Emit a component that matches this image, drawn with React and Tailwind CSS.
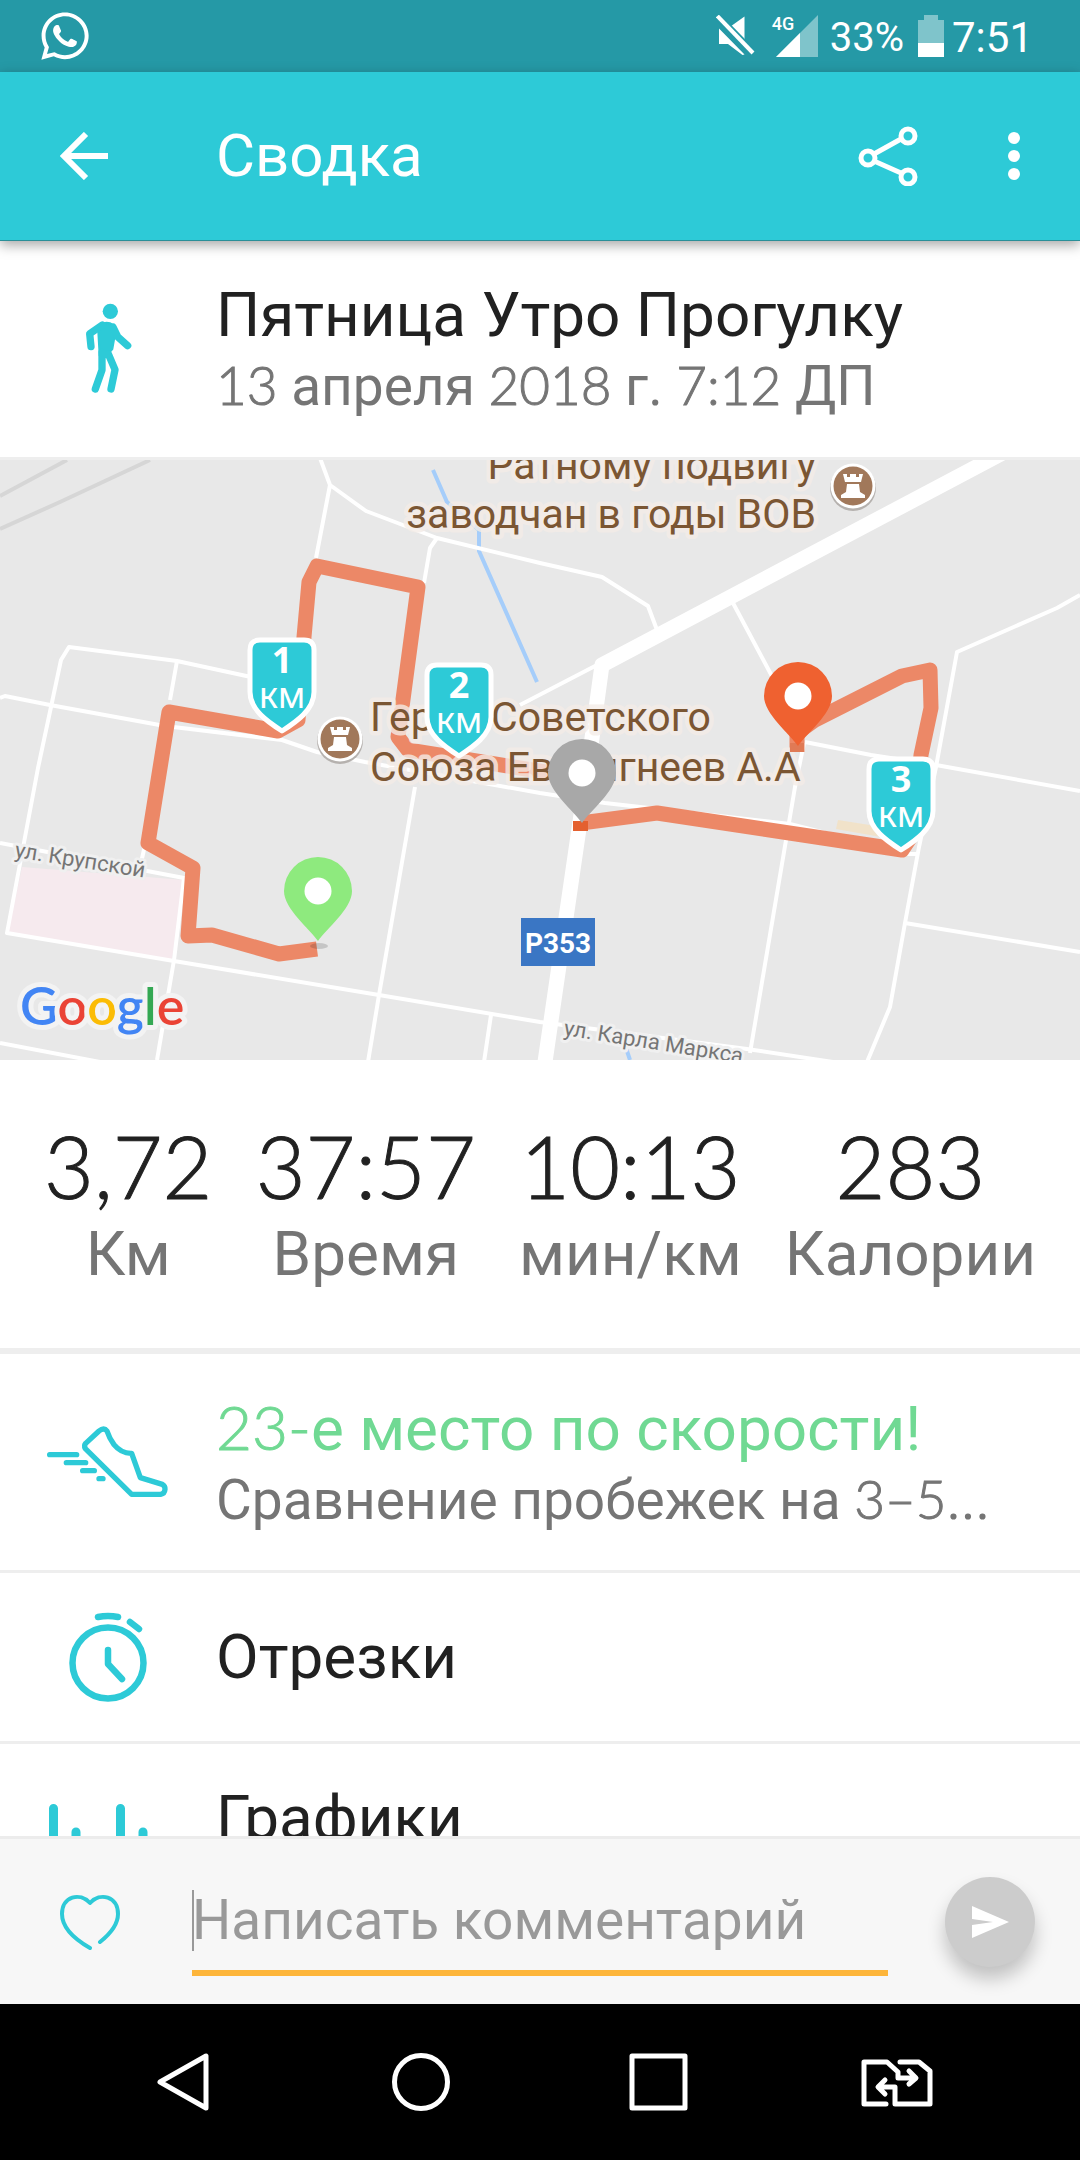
import React from "react";
import { FaWhatsapp } from "react-icons/fa";

const TEAL = "#2dcad7";

/* Digits are set in light Lato with a thin outline, letters in Roboto. */
const DIGITS = "font-['Lato',sans-serif] font-light [-webkit-text-stroke:1px_currentColor]";

function Mixed({ children, digits = "" }) {
  return children.split(/([\d:–-]+)/).map((part, i) =>
    /^[\d:–-]+$/.test(part) ? (
      <span key={i} className={`${DIGITS} ${digits}`}>{part}</span>
    ) : (
      <React.Fragment key={i}>{part}</React.Fragment>
    )
  );
}

function StatusBar() {
  return (
    <div className="flex h-[72px] shrink-0 items-center justify-between bg-[#2599a6] pl-[38px] pr-[47px] text-white">
      <FaWhatsapp className="size-[54px]" aria-label="WhatsApp" />
      <div className="flex items-center">
        <svg className="mr-[16px] h-[42px] w-[40px]" viewBox="0 0 40 42" fill="#fff">
          <path d="M14.500 11.500L28.500 1.500V26Z" />
          <path d="M1.400 1.500L37 38" stroke="#2599a6" strokeWidth="8" />
          <path d="M1.400 1L37 38" stroke="#fff" strokeWidth="4" />
          <path d="M3 13.500L28.500 39.500L26.500 40L12 29H3Z" />
        </svg>
        <div className="relative mr-[12px] h-[42px] w-[46px]">
          <svg className="h-full w-full" viewBox="0 0 46 42">
            <path d="M4 42L46 0V42Z" fill="#7fc4cb" />
            <path d="M4 42L28 18V42Z" fill="#fff" />
          </svg>
          <span className="absolute top-0 left-0 text-[18px] leading-[18px] font-medium">4G</span>
        </div>
        <span className="mr-[14px] pt-[4px] text-[40px] leading-[48px]">33%</span>
        <svg className="mr-[8px] h-[42px] w-[26px]" viewBox="0 0 26 42">
          <path d="M6 0H20V5H26V42H0V5H6Z" fill="#7fc4cb" />
          <path d="M0 28H26V42H0Z" fill="#fff" />
        </svg>
        <span className="pt-[4px] text-[42px] leading-[48px]">7:51</span>
      </div>
    </div>
  );
}

function AppBar() {
  return (
    <header className="z-10 flex h-[169px] shrink-0 items-center border-b border-[#2a8f98] bg-[#2dcad7] text-white shadow-[0_4px_12px_rgba(0,0,0,0.35)]">
      <button type="button" aria-label="Назад" className="flex w-[216px] items-center pl-[60px]">
        <svg className="size-[48px]" viewBox="0 0 48 48" fill="none" stroke="#fff" strokeWidth="6">
          <path d="M48 24H6M26 2L4 24L26 46" />
        </svg>
      </button>
      <h1 className="flex-1 text-[60px] leading-[72px]">Сводка</h1>
      <button type="button" aria-label="Поделиться" className="mr-[76px]">
        <svg className="size-[60px]" viewBox="0 0 60 60" fill="none" stroke="#fff" strokeWidth="5">
          <path d="M16 28L43 13M16 35L43 47" />
          <circle cx="10" cy="32" r="7" />
          <circle cx="50" cy="10" r="7" />
          <circle cx="50" cy="51" r="7" />
        </svg>
      </button>
      <button type="button" aria-label="Ещё" className="mr-[46px]">
        <svg className="h-[60px] w-[40px]" viewBox="0 0 40 60" fill="#fff">
          <circle cx="20" cy="12" r="6" />
          <circle cx="20" cy="30" r="6" />
          <circle cx="20" cy="48" r="6" />
        </svg>
      </button>
    </header>
  );
}

function Pin({ x, y, color }) {
  return (
    <g transform={`translate(${x} ${y})`}>
      <path d="M0 0C-8 -12 -34 -32 -34 -50A34 34 0 0 1 34 -50C34 -32 8 -12 0 0Z" fill={color} />
      <circle cy="-50" r="13.500" fill="#fff" />
    </g>
  );
}

function KmMarker({ x, y, n }) {
  return (
    <g transform={`translate(${x} ${y})`} textAnchor="middle" fill="#fff" className="font-['Noto_Sans',sans-serif] text-[36px]">
      <path
        d="M-22 2H22Q32 2 32 12V54C32 72 14 84 0 93C-14 84 -32 72 -32 54V12Q-32 2 -22 2Z"
        fill={TEAL}
        stroke="#fff"
        strokeWidth="5"
        strokeLinejoin="round"
      />
      <text y="35" className="font-bold">{n}</text>
      <text y="70">км</text>
    </g>
  );
}

function Castle({ x, y }) {
  return (
    <g transform={`translate(${x} ${y})`}>
      <circle cy="2" r="23" fill="#b5b1ae" />
      <circle r="22.500" fill="#fff" />
      <circle r="19.500" fill="#a1785a" />
      <path d="M-10 -12H-6V-9H-3V-12H3V-9H6V-12H10L8 -4H-8ZM-6 -2H6L7 6L12 9V12H-12V9L-7 6Z" fill="#fff" />
    </g>
  );
}

function RouteMap() {
  return (
    <svg className="block h-[600px] w-full shrink-0" viewBox="0 0 1080 600" preserveAspectRatio="xMidYMid slice" role="img" aria-label="Карта маршрута">
      <rect x="-1000" width="3080" height="600" fill="#e8e8e8" />
      <g fill="none" stroke="#d6d6d6" strokeWidth="4">
        <path d="M0 36L67 0M0 69L60 42L150 0" />
      </g>
      <path d="M22 407L184 420L172 499L8 472Z" fill="#f6eaee" />
      <path d="M838 360L876 366L881 377L836 369Z" fill="#f1e2c9" />
      <g fill="none" stroke="#a5cdfa" strokeWidth="4">
        <path d="M433 10L447 42L479 70V91L537 222M626 588L630 600" />
      </g>
      <g fill="none" stroke="#fff" strokeWidth="4" strokeLinejoin="round">
        <path d="M320 -2L330 25L316 98M330 25L366 51L437 78L540 103L602 117L648 146L657 170M437 78L430 88L424 123" />
        <path d="M0 238L5 236L50 245L165 266L282 280L317 292L365 302L540 333L605 343L790 364L908 394H918" />
        <path d="M251 217L177 201L69 187L61 200L38 308L7 473L174 501L379 535L540 562L747 589L833 602" />
        <path d="M177 201L170 240M145 385L141 403M0 383L184 418L174 500L157 600M0 583L100 602" />
        <path d="M415 327L379 535L368 602M491 555L484 602M597 205L520 245" />
        <path d="M733 143L774 220M1080 135L1057 148L957 192L936 307L919 387L905 463L890 547L867 602" />
        <path d="M805 282L871 295L936 305L1080 331M804 283L795 327L750 593M905 463L1080 492" />
      </g>
      <path d="M1012 -12L602 205L589 300L545 602" fill="none" stroke="#fff" strokeWidth="15" strokeLinejoin="round" />
      <path
        d="M317 489L279 494L212 475L188 476L193 408L148 383L169 252L278 271L298 260L304 177L309 122L317 106L418 127L398 277L408 290L545 312L581 317M581 363L657 353L902 390L912 375L921 295L931 248L930 210L902 216L815 260L797 273V292"
        fill="none"
        stroke="#ec8867"
        strokeWidth="15"
        strokeLinejoin="round"
      />
      <g fill="#7b5633" stroke="#f4ece7" strokeOpacity="0.8" strokeWidth="9" strokeLinejoin="round" className="[paint-order:stroke] text-[41px]">
        <text x="816" y="19" textAnchor="end">Ратному подвигу</text>
        <text x="816" y="68" textAnchor="end">заводчан в годы ВОВ</text>
        <text x="370" y="271">Герой Советского</text>
        <text x="370" y="321">Союза Евстигнеев А.А</text>
      </g>
      <g fill="#757575" stroke="#f0f0f0" strokeWidth="6" strokeLinejoin="round" className="[paint-order:stroke] text-[22px]">
        <text transform="translate(14 397) rotate(9)">ул. Крупской</text>
        <text transform="translate(563 575) rotate(9)">ул. Карла Маркса</text>
      </g>
      <rect x="521" y="458" width="74" height="48" fill="#3a76c4" />
      <text x="558" y="493" textAnchor="middle" fill="#fff" className="text-[28px] font-bold">Р353</text>
      <g stroke="#f3f3f3" strokeWidth="10" strokeLinejoin="round" className="[paint-order:stroke] font-['Lato',sans-serif] text-[52px] font-semibold">
        <text x="20" y="565">
          <tspan fill="#4285f4">G</tspan>
          <tspan fill="#ea4335">o</tspan>
          <tspan fill="#fbbc05">o</tspan>
          <tspan fill="#4285f4">g</tspan>
          <tspan fill="#34a853">l</tspan>
          <tspan fill="#ea4335">e</tspan>
        </text>
      </g>
      <Castle x={340} y={279} />
      <Castle x={853} y={26} />
      <ellipse cx="319" cy="486" rx="9" ry="3" fill="#000" opacity="0.15" />
      <path d="M573 361H588V371H573Z" fill="#e4602f" />
      <path d="M790 283H804V292H790Z" fill="#e07a55" />
      <Pin x={582} y={363} color="#a8a8a8" />
      <Pin x={318} y={481} color="#8eea7e" />
      <Pin x={798} y={286} color="#ef6130" />
      <KmMarker x={282} y={178} n="1" />
      <KmMarker x={459} y={203} n="2" />
      <KmMarker x={901} y={297} n="3" />
    </svg>
  );
}

const STATS = [
  ["3,72", "Км"],
  ["37:57", "Время"],
  ["10:13", "мин/км"],
  ["283", "Калории"],
];

function Stats() {
  return (
    <dl className="flex h-[294px] shrink-0 justify-between border-b-[6px] border-[#eeeeee] px-[44px] pt-[62px] text-center">
      {STATS.map(([value, label]) => (
        <div key={label} className="flex flex-col-reverse justify-end gap-2">
          <dt className="text-[62px] leading-[72px] text-[#757575]">{label}</dt>
          <dd className={`text-[86px] leading-[88px] text-[#212121] ${DIGITS}`}>{value}</dd>
        </div>
      ))}
    </dl>
  );
}

function Row({ icon, children, className = "min-h-[219px]" }) {
  return (
    <div className={`flex shrink-0 items-center border-b-[3px] border-[#eeeeee] ${className}`}>
      <div className="flex w-[216px] shrink-0 justify-center pl-[2px]">{icon}</div>
      <div className="min-w-0 flex-1 pr-[60px]">{children}</div>
    </div>
  );
}

const TITLE = "truncate text-[62px] leading-[72px]";
const SUBTITLE = "truncate text-[55px] leading-[68px] text-[#757575]";

const WalkerIcon = (
  <svg className="h-[120px] w-[80px]" viewBox="0 0 240 360" fill={TEAL} stroke={TEAL} strokeLinecap="round" strokeLinejoin="round">
    <circle cx="124" cy="67" r="23" stroke="none" />
    <path d="M95 106Q115 96 133 108L140 124L130 180L108 205L92 200L88 130Z" strokeWidth="6" />
    <path d="M100 108L62 134L66 173M132 114L146 143L176 170M99 190V243L79 300M118 195L138 242L126 300" fill="none" strokeWidth="22" />
  </svg>
);

const ShoeIcon = (
  <svg className="h-[110px] w-[140px]" viewBox="0 0 420 330" fill="none" stroke={TEAL} strokeWidth="16" strokeLinecap="round" strokeLinejoin="round">
    <path d="M32 143H113M82 167H140M131 191H166M180 215H192" />
    <path d="M180 72L140 109Q134 116 139 125L278 262H365Q377 260 378 247Q379 237 370 232L304 212L278 139Q247 140 225 113Q211 94 204 72Q195 60 180 72Z" />
  </svg>
);

const StopwatchIcon = (
  <svg className="size-[90px]" viewBox="0 0 90 90" fill="none" stroke={TEAL} strokeWidth="6.500" strokeLinecap="round" strokeLinejoin="round">
    <circle cx="44" cy="51" r="35.500" />
    <path d="M44 38V52L58 67M34 5Q44 3 54 5M66 10L75 17" />
  </svg>
);

const ChartIcon = (
  <svg className="h-[96px] w-[120px]" viewBox="0 0 120 96" fill="none" stroke={TEAL} strokeWidth="9" strokeLinecap="round">
    <path d="M4.500 4.500V91M27 28V91M49 50V91M71.500 4.500V91M94 28V91M115 60V91" />
  </svg>
);

function CommentBar() {
  return (
    <form className="flex h-[168px] shrink-0 items-center border-t-[3px] border-[#ececec] bg-[#f7f7f7]" onSubmit={(e) => e.preventDefault()}>
      <button type="button" aria-label="Нравится" className="flex w-[192px] pl-[60px]">
        <svg className="h-[56px] w-[60px]" viewBox="0 0 60 56" fill="none" stroke={TEAL} strokeWidth="4" strokeLinecap="round" strokeLinejoin="round">
          <path d="M30 54C16 46 2 34 2 20C2 2 20 -2 30 9C40 -2 58 2 58 20C58 31 50 40 40 48" />
        </svg>
      </button>
      <div className="relative mb-[28px] min-w-0 flex-1 self-end">
        <input
          type="text"
          aria-label="Написать комментарий"
          placeholder="Написать комментарий"
          className="block h-[90px] w-full border-b-[6px] border-[#fdb53a] bg-transparent pb-[16px] text-[55px] leading-[68px] text-[#212121] outline-none placeholder:text-[#999999] placeholder:opacity-100"
        />
        <span className="absolute top-[4px] left-0 h-[61px] w-[2px] bg-[#999999]" />
      </div>
      <button type="submit" aria-label="Отправить" className="mr-[45px] ml-[57px] flex size-[90px] items-center justify-center rounded-full bg-[#cccccc] shadow-[0_12px_18px_rgba(0,0,0,0.22)]">
        <svg className="h-[32px] w-[37px]" viewBox="0 0 37 32" fill="#fff">
          <path d="M0 0L37 16L0 32V19L21 16L0 13Z" />
        </svg>
      </button>
    </form>
  );
}

function NavBar() {
  const svg = { viewBox: "0 0 72 60", fill: "none", stroke: "#fff", strokeWidth: 5, strokeLinejoin: "round", strokeLinecap: "round", className: "h-[60px] w-[72px]" };
  const btn = "flex items-center justify-center";
  return (
    <nav className="grid h-[156px] shrink-0 grid-cols-4 bg-black px-16">
      <button type="button" aria-label="Назад" className={btn}>
        <svg {...svg}><path d="M13 30L59 4V56Z" /></svg>
      </button>
      <button type="button" aria-label="Домой" className={btn}>
        <svg {...svg}><circle cx="36" cy="30" r="26.500" /></svg>
      </button>
      <button type="button" aria-label="Недавние" className={btn}>
        <svg {...svg}><path d="M9 4H62V56H9Z" /></svg>
      </button>
      <button type="button" aria-label="Сменить SIM" className={btn}>
        <svg {...svg}>
          <path d="M25 52H3V10H26L37 20V26H54M48 19L55 26L48 32M39 10H58L69 19V52H34V35H18M24 28L17 35L24 42" />
        </svg>
      </button>
    </nav>
  );
}

export default function App() {
  return (
    <div className="flex h-screen flex-col overflow-hidden bg-white font-['Roboto',sans-serif] text-[#212121]">
      <StatusBar />
      <AppBar />
      <main className="flex min-h-0 flex-1 flex-col overflow-hidden">
        <Row icon={WalkerIcon}>
          <h2 className={TITLE}>Пятница Утро Прогулку</h2>
          <p className={SUBTITLE}><Mixed digits="text-[53px]">13 апреля 2018 г. 7:12 ДП</Mixed></p>
        </Row>
        <RouteMap />
        <Stats />
        <Row icon={ShoeIcon}>
          <h2 className={`${TITLE} text-[#70d993]`}><Mixed>23-е место по скорости!</Mixed></h2>
          <p className={SUBTITLE}><Mixed digits="text-[53px]">Сравнение пробежек на 3–5...</Mixed></p>
        </Row>
        <Row icon={StopwatchIcon} className="min-h-[171px]">
          <h2 className={TITLE}>Отрезки</h2>
        </Row>
        <Row icon={ChartIcon}>
          <h2 className={`${TITLE} mb-[68px]`}>Графики</h2>
        </Row>
      </main>
      <CommentBar />
      <NavBar />
    </div>
  );
}
